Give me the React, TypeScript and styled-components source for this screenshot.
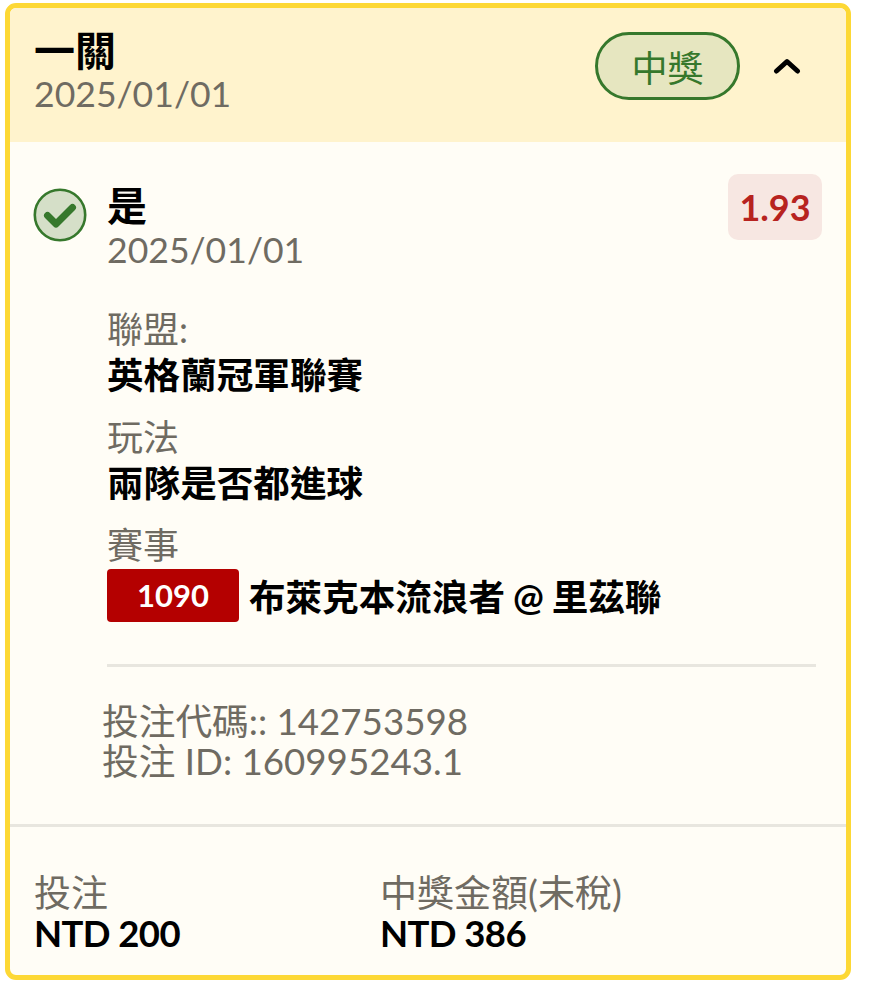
import React from "react";
import styled, { createGlobalStyle } from "styled-components";

const Global = createGlobalStyle`
  html, body { margin: 0; padding: 0; background: #fff; }
  body { font-family: Lato, "Noto Sans CJK TC", sans-serif; }
`;

const Card = styled.div`
  box-sizing: border-box;
  width: 846px;
  height: 977px;
  margin: 3px 0 0 5px;
  border: 5px solid #fdd835;
  border-radius: 11px;
  background: #fffdf6;
  display: flex;
  flex-direction: column;
  overflow: hidden;
`;

const Header = styled.header`
  box-sizing: border-box;
  height: 134px;
  background: #fff3cd;
  padding: 19px 45px 0 24px;
  display: flex;
  justify-content: space-between;
  align-items: flex-start;
`;

const TitleBlock = styled.div`
  display: flex;
  flex-direction: column;
`;

const Title = styled.div`
  font-size: 41px;
  line-height: 47px;
  font-weight: 700;
  color: #000;
`;

const DateText = styled.div`
  font-size: 35.6px;
  line-height: 40px;
  color: #6f6b62;
`;

const HeaderRight = styled.div`
  display: flex;
  align-items: center;
  gap: 33px;
  margin-top: 5px;
`;

const StatusPill = styled.div`
  box-sizing: border-box;
  width: 145px;
  height: 68px;
  border: 3px solid #36782c;
  border-radius: 34px;
  background: #e6e6c0;
  color: #36782c;
  font-size: 36px;
  display: flex;
  align-items: center;
  justify-content: center;
`;

const Chevron = styled.svg`
  width: 28px;
  height: 18px;
  display: block;
`;

const Body = styled.section`
  box-sizing: border-box;
  height: 682px;
  padding: 32px 24px 0 23px;
  display: flex;
  flex-direction: column;
`;

const Selection = styled.div`
  display: flex;
  align-items: flex-start;
  gap: 20px;
`;

const CheckIcon = styled.svg`
  width: 54px;
  height: 54px;
  margin-top: 14px;
  flex: none;
`;

const SelectionText = styled.div`
  flex: 1;
  display: flex;
  flex-direction: column;
`;

const SelectionName = styled.div`
  font-size: 40px;
  line-height: 48px;
  font-weight: 700;
  color: #000;
  margin-top: 8px;
`;

const Odds = styled.div`
  box-sizing: border-box;
  width: 94px;
  height: 66px;
  border-radius: 10px;
  background: #f7e7e2;
  color: #b7231f;
  font-size: 36px;
  font-weight: 700;
  display: flex;
  align-items: center;
  justify-content: center;
`;

const Details = styled.div`
  margin: 37px 6px 0 74px;
  display: flex;
  flex-direction: column;
`;

const Label = styled.div`
  font-size: 36px;
  line-height: 45px;
  color: #6f6b62;
`;

const Value = styled.div`
  font-size: 36.6px;
  line-height: 46px;
  font-weight: 700;
  color: #000;
  margin-bottom: 17px;
`;

const MatchRow = styled.div`
  display: flex;
  align-items: center;
  gap: 10px;
  height: 54px;
  font-size: 36.6px;
  font-weight: 700;
  color: #000;
  word-spacing: -1px;
`;

const MatchCode = styled.span`
  box-sizing: border-box;
  width: 132px;
  height: 53px;
  background: #b40000;
  color: #fff;
  border-radius: 4px;
  font-size: 31px;
  font-weight: 700;
  display: flex;
  align-items: center;
  justify-content: center;
`;

const InnerRule = styled.hr`
  border: 0;
  height: 3px;
  background: #e8e6df;
  margin: 42px 0 0;
`;

const Codes = styled.div`
  margin: 34px 0 0 -5px;
  font-size: 36.7px;
  line-height: 40px;
  color: #6f6b62;
`;

const Footer = styled.footer`
  box-sizing: border-box;
  flex: 1;
  border-top: 3px solid #e8e6df;
  padding: 46px 24px 0;
  display: grid;
  grid-template-columns: 346px 1fr;
`;

const Stat = styled.div`
  display: flex;
  flex-direction: column;
`;

const StatLabel = styled.div`
  font-size: 37px;
  line-height: 40px;
  color: #6f6b62;
`;

const StatValue = styled.div`
  font-size: 36.5px;
  line-height: 40px;
  font-weight: 700;
  color: #000;
  letter-spacing: -0.6px;
`;

export default function App() {
  return (
    <>
      <Global />
      <Card>
        <Header>
          <TitleBlock>
            <Title>一關</Title>
            <DateText>2025/01/01</DateText>
          </TitleBlock>
          <HeaderRight>
            <StatusPill>中獎</StatusPill>
            <Chevron viewBox="0 0 28 18" aria-hidden="true">
              <path d="M3.5 14 L14 4.5 L24.5 14" fill="none" stroke="#000" strokeWidth="5" strokeLinecap="round" strokeLinejoin="round" />
            </Chevron>
          </HeaderRight>
        </Header>
        <Body>
          <Selection>
            <CheckIcon viewBox="0 0 54 54" aria-hidden="true">
              <circle cx="27" cy="27" r="25.2" fill="#d5dfc8" stroke="#36782c" strokeWidth="2.6" />
              <path d="M14.5 27.5 L23 36 L39.5 19.5" fill="none" stroke="#36782c" strokeWidth="7" strokeLinecap="round" strokeLinejoin="round" />
            </CheckIcon>
            <SelectionText>
              <SelectionName>是</SelectionName>
              <DateText>2025/01/01</DateText>
            </SelectionText>
            <Odds>1.93</Odds>
          </Selection>
          <Details>
            <Label>聯盟:</Label>
            <Value>英格蘭冠軍聯賽</Value>
            <Label>玩法</Label>
            <Value>兩隊是否都進球</Value>
            <Label>賽事</Label>
            <MatchRow>
              <MatchCode>1090</MatchCode>
              布萊克本流浪者 @ 里茲聯
            </MatchRow>
            <InnerRule />
            <Codes>
              投注代碼:: 142753598
              <br />
              投注 ID: 160995243.1
            </Codes>
          </Details>
        </Body>
        <Footer>
          <Stat>
            <StatLabel>投注</StatLabel>
            <StatValue>NTD 200</StatValue>
          </Stat>
          <Stat>
            <StatLabel>中獎金額(未稅)</StatLabel>
            <StatValue>NTD 386</StatValue>
          </Stat>
        </Footer>
      </Card>
    </>
  );
}
